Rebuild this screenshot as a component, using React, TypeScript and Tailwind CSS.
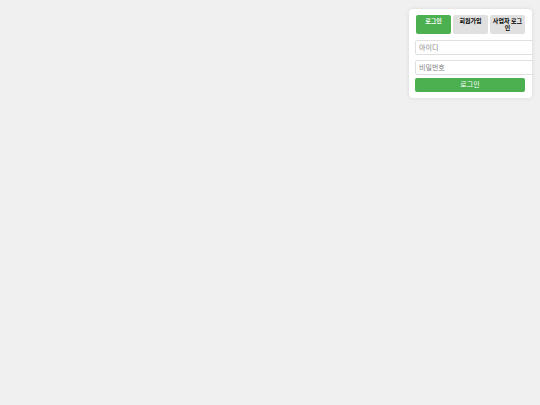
import { useState } from "react";

const tabs = [
  { id: "login", label: "로그인" },
  { id: "signup", label: "회원가입" },
  { id: "business", label: "사업자 로그인" },
];

function LoginField({
  type,
  name,
  label,
}: {
  type: string;
  name: string;
  label: string;
}) {
  const [value, setValue] = useState("");

  return (
    <input
      type={type}
      name={name}
      aria-label={label}
      placeholder={label}
      value={value}
      onChange={(e) => setValue(e.currentTarget.value)}
      className="block w-[120px] h-[15px] px-[3px] bg-white border border-[#e0e0e0] rounded-xs text-[7px] leading-[8px] text-black placeholder:text-[#858585] focus:outline-none"
    />
  );
}

function App() {
  const [active, setActive] = useState("login");

  return (
    <main className="min-h-screen bg-[#f0f0f0] flex justify-end items-start p-[9px] pr-2 font-['Liberation_Sans','Noto_Sans_CJK_KR',sans-serif]">
      <section className="w-[123px] overflow-hidden rounded-[4px] bg-white p-[6px] pr-[7px] shadow-[0_0_4px_rgba(0,0,0,0.1)]">
        <div className="flex gap-[2px] pl-px">
          {tabs.map((tab) => (
            <button
              key={tab.id}
              type="button"
              onClick={() => setActive(tab.id)}
              className={`flex flex-1 h-[19px] justify-center items-start rounded-xs px-[2px] pt-[3px] text-center text-[6px] leading-[7px] font-bold cursor-pointer ${
                active === tab.id
                  ? "bg-[#4caf50] text-white"
                  : "bg-[#e0e0e0] text-black"
              }`}
            >
              {tab.label}
            </button>
          ))}
        </div>

        <form className="mt-[6px]" onSubmit={(e) => e.preventDefault()}>
          <div className="flex flex-col gap-[5px]">
            <LoginField type="text" name="username" label="아이디" />
            <LoginField type="password" name="password" label="비밀번호" />
          </div>
          <button
            type="submit"
            className="mt-[3px] block w-full h-[14px] rounded-xs bg-[#4caf50] text-[7px] leading-[8px] text-white cursor-pointer"
          >
            로그인
          </button>
        </form>
      </section>
    </main>
  );
}

export default App;
